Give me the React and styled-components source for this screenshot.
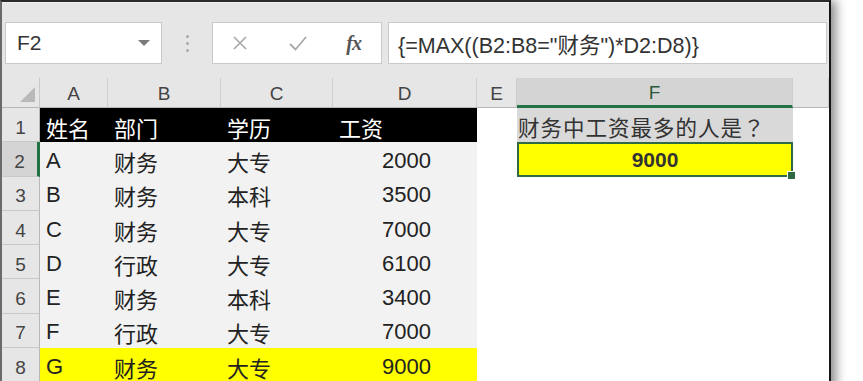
import React from 'react'
import styled, { createGlobalStyle } from 'styled-components'

const GlobalStyle = createGlobalStyle`
html, body {
    margin: 0;
    padding: 0;
    background: #ffffff;
    overflow: hidden;
}
body {
    font-family: "Liberation Sans", "Noto Sans CJK SC", sans-serif;
}
`

// G is only partly on screen, so its letter is out of view
const cols = ['A', 'B', 'C', 'D', 'E', 'F', '']

const rows = [
    ['A', '财务', '大专', '2000'],
    ['B', '财务', '本科', '3500'],
    ['C', '财务', '大专', '7000'],
    ['D', '行政', '大专', '6100'],
    ['E', '财务', '本科', '3400'],
    ['F', '行政', '大专', '7000'],
    ['G', '财务', '大专', '9000'],
]

function CrossIcon() {
    return (
        <svg width="18" height="18" viewBox="0 0 18 18">
            <path d="M3 3 L15 15 M15 3 L3 15" stroke="#a8a8a8" strokeWidth="1.6" fill="none" />
        </svg>
    )
}

function CheckIcon() {
    return (
        <svg width="20" height="18" viewBox="0 0 20 18">
            <path d="M2 10 L7.5 15.5 L18 3" stroke="#a8a8a8" strokeWidth="1.8" fill="none" />
        </svg>
    )
}

function App() {
    return (
        <>
            <GlobalStyle />
            <Screen>
                <Window>
                    <Toolbar>
                        <NameBox>
                            <span>F2</span>
                            <Caret />
                        </NameBox>
                        <Dots>
                            <i /><i /><i />
                        </Dots>
                        <ButtonBox>
                            <CrossIcon />
                            <CheckIcon />
                            <Fx>fx</Fx>
                        </ButtonBox>
                        <FormulaBox>{'{=MAX((B2:B8="财务")*D2:D8)}'}</FormulaBox>
                    </Toolbar>
                    <Sheet>
                        <Corner><CornerMark /></Corner>
                        {cols.map((c, i) => (
                            <ColHead key={i} selected={c === 'F'}>{c}</ColHead>
                        ))}

                        <RowHead>1</RowHead>
                        <Cell tone="black">姓名</Cell>
                        <Cell tone="black">部门</Cell>
                        <Cell tone="black">学历</Cell>
                        <Cell tone="black">工资</Cell>
                        <Cell />
                        <Cell tone="question">财务中工资最多的人是？</Cell>
                        <Cell />

                        {rows.map((r, i) => {
                            const n = i + 2
                            const tone = n === 8 ? 'yellow' : 'gray'
                            return (
                                <React.Fragment key={n}>
                                    <RowHead selected={n === 2}>{n}</RowHead>
                                    <Cell tone={tone}>{r[0]}</Cell>
                                    <Cell tone={tone}>{r[1]}</Cell>
                                    <Cell tone={tone}>{r[2]}</Cell>
                                    <Cell tone={tone} number>{r[3]}</Cell>
                                    <Cell />
                                    {n === 2 ? (
                                        <ActiveCell>
                                            9000
                                            <FillHandle />
                                        </ActiveCell>
                                    ) : <Cell />}
                                    <Cell />
                                </React.Fragment>
                            )
                        })}
                    </Sheet>
                </Window>
            </Screen>
        </>
    )
}

export default App

const Screen = styled.div`
width: 863px;
height: 381px;
overflow: hidden;
display: flex;
background: #ffffff;
`
const Window = styled.div`
width: 827px;
height: 400px;
display: flex;
flex-direction: column;
border-top: 2px solid #2a2a2a;
border-left: 2px solid #6a6a6a;
border-right: 2px solid #151515;
background: #e6e6e6;
box-shadow: 5px 0 10px rgba(0, 0, 0, 0.45);
`
const Toolbar = styled.div`
height: 76px;
display: flex;
align-items: flex-start;
padding-top: 19px;
box-sizing: border-box;
background: #e6e6e6;
border-top: 1px solid #f2f2f2;
`
const NameBox = styled.div`
margin-left: 3px;
width: 157px;
height: 42px;
box-sizing: border-box;
background: #ffffff;
border: 1px solid #c9c9c9;
display: flex;
align-items: center;
justify-content: space-between;
padding: 0 11px 0 11px;
font-size: 21px;
color: #333;
`
const Caret = styled.div`
width: 0;
height: 0;
border-left: 6px solid transparent;
border-right: 6px solid transparent;
border-top: 6px solid #7a7a7a;
`
const Dots = styled.div`
width: 50px;
height: 42px;
display: flex;
flex-direction: column;
align-items: center;
justify-content: center;
gap: 4px;
>i{
    display: block;
    width: 3px;
    height: 3px;
    border-radius: 50%;
    background: #a8a8a8;
}
`
const ButtonBox = styled.div`
width: 170px;
height: 42px;
box-sizing: border-box;
background: #ffffff;
border: 1px solid #c9c9c9;
display: flex;
align-items: center;
justify-content: space-between;
padding: 0 20px 0 18px;
`
const Fx = styled.span`
font-family: "Liberation Serif", "DejaVu Serif", serif;
font-style: italic;
font-weight: bold;
font-size: 20px;
color: #555;
letter-spacing: -1px;
`
const FormulaBox = styled.div`
margin-left: 6px;
flex: 1;
margin-right: 2px;
height: 42px;
box-sizing: border-box;
background: #ffffff;
border: 1px solid #c9c9c9;
display: flex;
align-items: center;
padding-left: 9px;
font-size: 21.5px;
color: #333;
white-space: nowrap;
`
const Sheet = styled.div`
display: grid;
grid-template-columns: 38px 68px 113px 112px 144px 40px 276px 36px;
grid-template-rows: 30px repeat(8, 34.3px);
background: #ffffff;
`
const Corner = styled.div`
background: #e6e6e6;
border-right: 1px solid #c8c8c8;
border-bottom: 1px solid #b8b8b8;
display: flex;
align-items: flex-end;
justify-content: flex-end;
padding: 0 4px 5px 0;
`
const CornerMark = styled.div`
width: 0;
height: 0;
border-left: 15px solid transparent;
border-bottom: 15px solid #b9b9b9;
`
const ColHead = styled.div`
background: ${p => (p.selected ? '#d4d4d4' : '#e6e6e6')};
border-right: 1px solid #cdcdcd;
border-bottom: ${p => (p.selected ? '3px solid #217346' : '1px solid #b8b8b8')};
box-sizing: border-box;
display: flex;
align-items: center;
justify-content: center;
font-size: 19px;
color: ${p => (p.selected ? '#2b5a3b' : '#444')};
padding-top: 2px;
`
const RowHead = styled.div`
background: ${p => (p.selected ? '#d4d4d4' : '#e6e6e6')};
border-right: ${p => (p.selected ? '3px solid #217346' : '1px solid #b8b8b8')};
border-bottom: 1px solid #c8c8c8;
box-sizing: border-box;
display: flex;
align-items: center;
justify-content: center;
font-size: 19px;
color: #444;
padding-top: 6px;
`
const toneBg = {
    black: '#000000',
    gray: '#f2f2f2',
    yellow: '#ffff00',
    question: '#d9d9d9',
}
const Cell = styled.div`
background: ${p => toneBg[p.tone] || '#ffffff'};
color: ${p => (p.tone === 'black' ? '#ffffff' : '#222')};
font-size: 22px;
display: flex;
align-items: center;
justify-content: ${p => (p.number ? 'flex-end' : 'flex-start')};
padding: ${p => (p.number ? '3px 46px 0 0' : '3px 0 0 6px')};
white-space: nowrap;
overflow: visible;
${p => p.tone === 'question' && `
    padding-left: 1px;
    color: #333;
    font-family: "Noto Sans CJK JP", "Noto Sans CJK SC", sans-serif;
    font-size: 21.5px;
    letter-spacing: 1px;
`}
`
const ActiveCell = styled.div`
position: relative;
background: #ffff00;
border: 2px solid #2e6b45;
box-sizing: border-box;
display: flex;
align-items: center;
justify-content: center;
font-size: 21px;
font-weight: bold;
color: #333;
padding-top: 2px;
`
const FillHandle = styled.div`
position: absolute;
right: -5px;
bottom: -5px;
width: 7px;
height: 7px;
background: #2e6b45;
border: 1px solid #ffffff;
`
